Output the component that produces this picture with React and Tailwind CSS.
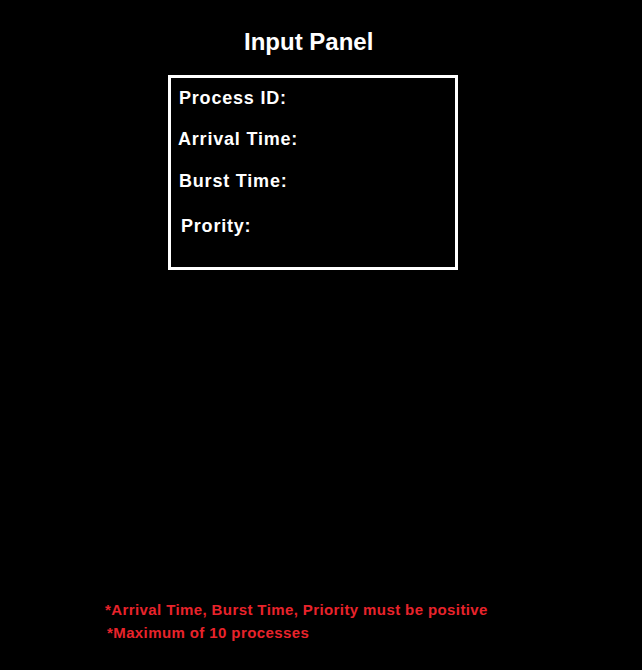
export default function App() {
  const font = { fontFamily: '"Liberation Sans", Arial, sans-serif' };
  return (
    <div className="w-[642px] h-[670px] bg-black flex flex-col items-start" style={font}>
      <h1 className="ml-[244px] mt-[28px] text-[24px] leading-[28px] font-bold text-white">Input Panel</h1>
      <div className="ml-[168px] mt-[19px] w-[290px] h-[195px] border-[3px] border-white flex flex-col items-start pt-[11px] text-[18px] leading-[18px] font-bold text-white tracking-[0.8px]">
        <div className="ml-[8px]">Process ID:</div>
        <div className="ml-[7px] mt-[23px]">Arrival Time:</div>
        <div className="ml-[8px] mt-[23.5px]">Burst Time:</div>
        <div className="ml-[10px] mt-[27.5px]">Prority:</div>
      </div>
      <div className="mt-[332px] flex flex-col items-start text-[15px] leading-[15px] font-bold text-[#e8232b] tracking-[0.4px]">
        <div className="ml-[105px]">*Arrival Time, Burst Time, Priority must be positive</div>
        <div className="ml-[107px] mt-[8px]">*Maximum of 10 processes</div>
      </div>
    </div>
  );
}
